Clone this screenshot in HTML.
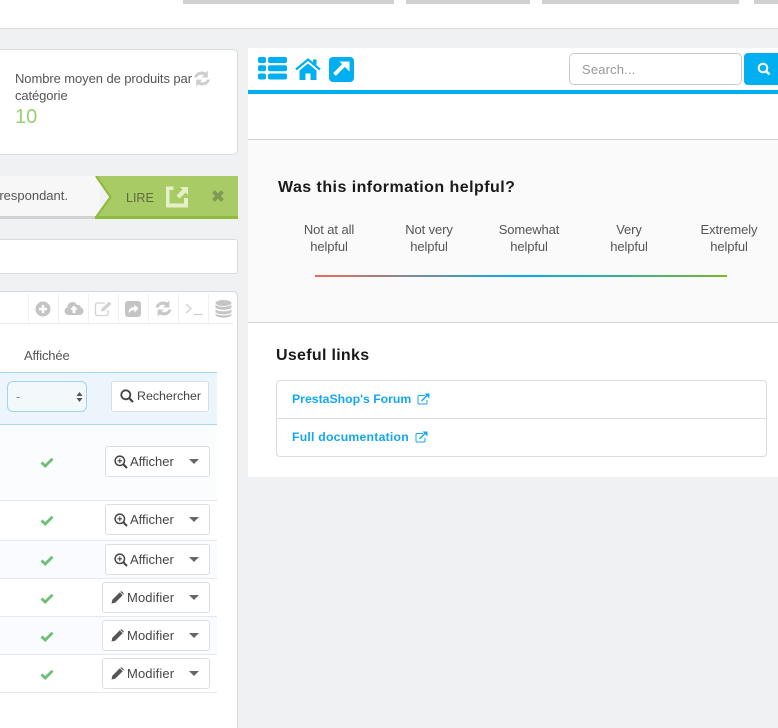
<!DOCTYPE html>
<html><head><meta charset="utf-8">
<style>
html,body{margin:0;padding:0;width:778px;height:728px;overflow:hidden}
body{position:relative;background:#eff1f3;font-family:"Liberation Sans",sans-serif;color:#555;font-size:13px}
div,span,svg{position:absolute;box-sizing:border-box}
#w{left:0;top:0;width:778px;height:728px;overflow:hidden}
.t{white-space:nowrap;line-height:16px}
.c{text-align:center;width:120px;letter-spacing:-.1px}
.btn{background:#fff;border:1px solid #dcdfe2;border-radius:3px}
.row{left:0;width:217px;border-bottom:1px solid #e6e9ec}
.car{width:0;height:0;border-left:5px solid transparent;border-right:5px solid transparent;border-top:5px solid #666}
.b{font-weight:bold;color:#1a1a1a}
.l{font-weight:bold;color:#13a8ee;font-size:12.25px}
.m{letter-spacing:.12px}
</style></head><body><div id="w">

<div style="left:0;top:0;width:778px;height:29px;background:#fff;border-bottom:1px solid #dcdcdc"></div>
<div style="left:183px;top:0;width:211px;height:4px;background:#d0d0d0"></div>
<div style="left:406px;top:0;width:124px;height:4px;background:#d0d0d0"></div>
<div style="left:542px;top:0;width:197px;height:4px;background:#d0d0d0"></div>
<div style="left:754px;top:0;width:24px;height:4px;background:#d0d0d0"></div>

<!-- stat card -->
<div style="left:-6px;top:49px;width:244px;height:106px;background:#fff;border:1px solid #d8dcdf;border-radius:5px"></div>
<div class="t" style="left:15px;top:71px;letter-spacing:-.08px">Nombre moyen de produits par</div>
<div class="t" style="left:15px;top:88px;letter-spacing:-.1px">catégorie</div>
<div class="t" style="left:15px;top:107px;font-size:20px;line-height:20px;color:#9ad071">10</div>
<svg style="left:193px;top:70px" width="18" height="17" viewBox="1 .5 16 16"><path d="M1.500 7.500C2.500 3 7.500 .5 12.500 2.800L14.500 1V7.500H8.500L10.800 5.500C8 4.300 5.300 5.300 4.500 7.500ZM16.500 9.500C15.500 14 10.500 16.500 5.500 14.200L3.500 16V9.500H9.500L7.200 11.500C10 12.700 12.700 11.700 13.500 9.500Z" fill="#cfcfcf"/></svg>

<!-- alert -->
<div style="left:0;top:176px;width:100px;height:43px;background:#f7f7f7;border-bottom:3px solid #d2d2d2"></div>
<div class="t" style="left:-5px;top:188px;color:#555">rrespondant.</div>
<svg style="left:94px;top:176px" width="144" height="43" viewBox="0 0 144 43"><path d="M2 0H144V43H1L16 21Z" fill="#a9cb65"/><path d="M2 0L16.500 21 1.500 42" fill="none" stroke="#8fbb3d" stroke-width="2.200"/><path d="M1 41.500H144" stroke="#8fbb3d" stroke-width="3"/></svg>
<div class="t" style="left:126px;top:190px;color:#5d6b3e;font-size:12.500px">LIRE</div>
<svg style="left:165px;top:185px" width="24" height="23" viewBox="0 0 24 23"><path d="M1 1.500H8.500V5H4.500V18.500H19V13H23V22.500H1Z" fill="#e3f0c8"/><path d="M15 2H23V10L20.500 7.500 14.500 13.500 11.500 10.500 17.500 4.500Z" fill="#e3f0c8"/></svg>
<svg style="left:211px;top:189px" width="14" height="14" viewBox="0 0 14 14"><path d="M2.500 2.500L11.500 11.500M11.500 2.500L2.500 11.500" stroke="#7f9a55" stroke-width="3.800"/></svg>

<!-- input bar -->
<div style="left:-6px;top:239px;width:244px;height:35px;background:#fff;border:1px solid #d8dcdf;border-radius:3px"></div>

<!-- table panel -->
<div style="left:-6px;top:291px;width:244px;height:445px;background:#fff;border:1px solid #d4d8db;border-radius:5px"></div>
<div style="left:0;top:323px;width:233px;height:1px;background:#e8eaec"></div>
<div style="left:28px;top:294px;width:1px;height:29px;background:#eff0f1"></div>
<div style="left:58px;top:294px;width:1px;height:29px;background:#eff0f1"></div>
<div style="left:88px;top:294px;width:1px;height:29px;background:#eff0f1"></div>
<div style="left:118px;top:294px;width:1px;height:29px;background:#eff0f1"></div>
<div style="left:148px;top:294px;width:1px;height:29px;background:#eff0f1"></div>
<div style="left:178px;top:294px;width:1px;height:29px;background:#eff0f1"></div>
<div style="left:208px;top:294px;width:1px;height:29px;background:#eff0f1"></div>

<svg style="left:35px;top:301px" width="16" height="16" viewBox="0 0 16 16"><circle cx="8" cy="8" r="7.500" fill="#c4c4c4"/><path d="M8 4V12M4 8H12" stroke="#fff" stroke-width="2.400"/></svg>
<svg style="left:64px;top:300px" width="20" height="16" viewBox="0 0 20 16"><path d="M5 15C2 15 .5 13 .5 11 .5 9 2 7.500 3.500 7.200 3.500 4 6 2 8.500 2 10.500 2 12 3 13 5 15 4.500 16.800 6 16.800 7.500 18.500 8 19.500 9.500 19.500 11 19.500 13.500 17.500 15 15.500 15Z" fill="#c4c4c4"/><path d="M10 5.500L14 9.500H11.500V13H8.500V9.500H6Z" fill="#fff"/></svg>
<svg style="left:94px;top:300px" width="19" height="17" viewBox="0 0 19 17"><path d="M11 3H3.500Q1.500 3 1.500 5V13.500Q1.500 15.500 3.500 15.500H12Q14 15.500 14 13.500V10" fill="none" stroke="#d2d2d2" stroke-width="1.300"/><path d="M7 11.500L7.800 8.500 15 1.500 17.500 4 10 11Z" fill="#d2d2d2"/></svg>
<svg style="left:125px;top:301px" width="16" height="16" viewBox="0 0 16 16"><rect width="16" height="16" rx="3" fill="#c4c4c4"/><path d="M3.500 12C3.500 8 6 6 9.500 6V3.500L13.500 7.500 9.500 11.500V9C7 9 5 10 3.500 12Z" fill="#fff"/></svg>
<svg style="left:155px;top:300px" width="17" height="17" viewBox="1 .5 16 16"><path d="M1.500 7.500C2.500 3 7.500 .5 12.500 2.800L14.500 1V7.500H8.500L10.800 5.500C8 4.300 5.300 5.300 4.500 7.500ZM16.500 9.500C15.500 14 10.500 16.500 5.500 14.200L3.500 16V9.500H9.500L7.200 11.500C10 12.700 12.700 11.700 13.500 9.500Z" fill="#c8c8c8"/></svg>
<svg style="left:185px;top:302px" width="18" height="14" viewBox="0 0 18 14"><path d="M1 2L6 6.500 1 11" fill="none" stroke="#cdcdcd" stroke-width="1.200"/><path d="M9 12.500H17.500" stroke="#cdcdcd" stroke-width="1.200"/></svg>
<svg style="left:215px;top:300px" width="17" height="18" viewBox="0 0 17 18" fill="#c4c4c4"><ellipse cx="8.500" cy="3" rx="8" ry="3"/><path d="M.5 4.500C2 7.500 15 7.500 16.500 4.500V7.500C15 10.500 2 10.500 .5 7.500Z"/><path d="M.5 9.300C2 12 15 12 16.500 9.300V12C15 15 2 15 .5 12Z"/><path d="M.5 13.500C2 16 15 16 16.500 13.500V15C15 18.500 2 18.500 .5 15Z"/></svg>

<div class="t" style="left:24px;top:348px;letter-spacing:-.15px">Affichée</div>

<!-- filter -->
<div style="left:0;top:372px;width:217px;height:53px;background:#ecf5fb;border-top:1px solid #a5d6f2;border-bottom:1px solid #a5d6f2"></div>
<div style="left:7px;top:381px;width:80px;height:31px;background:#f3f8fa;border:1px solid #a5d2ec;border-radius:6px"></div>
<div class="t" style="left:16px;top:389px;color:#888">-</div>
<svg style="left:76px;top:391px" width="7" height="12" viewBox="0 0 7 12"><path d="M3.500 1L6.500 5H.5ZM3.500 11L.5 7H6.500Z" fill="#555"/></svg>
<div class="btn" style="left:111px;top:381px;width:98px;height:31px"></div>
<svg style="left:120px;top:389px" width="14" height="14" viewBox="0 0 14 14"><circle cx="5.800" cy="5.800" r="4.500" fill="none" stroke="#444" stroke-width="1.800"/><path d="M9 9L13 13" stroke="#444" stroke-width="2.200"/></svg>
<div class="t" style="left:137px;top:388px;color:#444;font-size:12.4px">Rechercher</div>

<!-- rows -->
<div class="row" style="top:425px;height:76px;background:#fafcfe"></div>
<div class="row" style="top:501px;height:40px;background:#fff"></div>
<div class="row" style="top:541px;height:38px;background:#f9fbfe"></div>
<div class="row" style="top:579px;height:38px;background:#fff"></div>
<div class="row" style="top:617px;height:38px;background:#f9fbfe"></div>
<div class="row" style="top:655px;height:38px;background:#fff"></div>

<svg style="left:40px;top:457px" width="14" height="11" viewBox="0 0 14 11"><path d="M1.500 5.500L5.200 9 12.500 1.800" fill="none" stroke="#6cc074" stroke-width="2.800"/></svg>
<svg style="left:40px;top:515px" width="14" height="11" viewBox="0 0 14 11"><path d="M1.500 5.500L5.200 9 12.500 1.800" fill="none" stroke="#6cc074" stroke-width="2.800"/></svg>
<svg style="left:40px;top:555px" width="14" height="11" viewBox="0 0 14 11"><path d="M1.500 5.500L5.200 9 12.500 1.800" fill="none" stroke="#6cc074" stroke-width="2.800"/></svg>
<svg style="left:40px;top:593px" width="14" height="11" viewBox="0 0 14 11"><path d="M1.500 5.500L5.200 9 12.500 1.800" fill="none" stroke="#6cc074" stroke-width="2.800"/></svg>
<svg style="left:40px;top:631px" width="14" height="11" viewBox="0 0 14 11"><path d="M1.500 5.500L5.200 9 12.500 1.800" fill="none" stroke="#6cc074" stroke-width="2.800"/></svg>
<svg style="left:40px;top:669px" width="14" height="11" viewBox="0 0 14 11"><path d="M1.500 5.500L5.200 9 12.500 1.800" fill="none" stroke="#6cc074" stroke-width="2.800"/></svg>

<div class="btn" style="left:105px;top:446px;width:105px;height:31px"></div>
<svg style="left:114px;top:455px" width="14" height="14" viewBox="0 0 14 14"><circle cx="5.800" cy="5.800" r="4.700" fill="none" stroke="#444" stroke-width="1.500"/><path d="M9 9L13 13" stroke="#444" stroke-width="2"/><path d="M3.500 5.800H8.100M5.800 3.500V8.100" stroke="#444" stroke-width="1.100"/></svg>
<div class="t" style="left:130px;top:454px;color:#444">Afficher</div>
<div class="car" style="left:189px;top:459px"></div>

<div class="btn" style="left:105px;top:504px;width:105px;height:31px"></div>
<svg style="left:114px;top:513px" width="14" height="14" viewBox="0 0 14 14"><circle cx="5.800" cy="5.800" r="4.700" fill="none" stroke="#444" stroke-width="1.500"/><path d="M9 9L13 13" stroke="#444" stroke-width="2"/><path d="M3.500 5.800H8.100M5.800 3.500V8.100" stroke="#444" stroke-width="1.100"/></svg>
<div class="t" style="left:130px;top:512px;color:#444">Afficher</div>
<div class="car" style="left:189px;top:517px"></div>

<div class="btn" style="left:105px;top:544px;width:105px;height:31px"></div>
<svg style="left:114px;top:553px" width="14" height="14" viewBox="0 0 14 14"><circle cx="5.800" cy="5.800" r="4.700" fill="none" stroke="#444" stroke-width="1.500"/><path d="M9 9L13 13" stroke="#444" stroke-width="2"/><path d="M3.500 5.800H8.100M5.800 3.500V8.100" stroke="#444" stroke-width="1.100"/></svg>
<div class="t" style="left:130px;top:552px;color:#444">Afficher</div>
<div class="car" style="left:189px;top:557px"></div>

<div class="btn" style="left:102px;top:582px;width:108px;height:31px"></div>
<svg style="left:111px;top:591px" width="13" height="13" viewBox="0 0 13 13"><path d="M.5 12.500L1.300 8.800 8.800 1.300 11.700 4.200 4.200 11.700ZM9.600.5Q10.300 0 11 .5L12.500 2Q13 2.700 12.500 3.400L12.300 3.600 9.400.7Z" fill="#555"/></svg>
<div class="t m" style="left:127px;top:590px;color:#444">Modifier</div>
<div class="car" style="left:189px;top:595px"></div>

<div class="btn" style="left:102px;top:620px;width:108px;height:31px"></div>
<svg style="left:111px;top:629px" width="13" height="13" viewBox="0 0 13 13"><path d="M.5 12.500L1.300 8.800 8.800 1.300 11.700 4.200 4.200 11.700ZM9.600.5Q10.300 0 11 .5L12.500 2Q13 2.700 12.500 3.400L12.300 3.600 9.400.7Z" fill="#555"/></svg>
<div class="t m" style="left:127px;top:628px;color:#444">Modifier</div>
<div class="car" style="left:189px;top:633px"></div>

<div class="btn" style="left:102px;top:658px;width:108px;height:31px"></div>
<svg style="left:111px;top:667px" width="13" height="13" viewBox="0 0 13 13"><path d="M.5 12.500L1.300 8.800 8.800 1.300 11.700 4.200 4.200 11.700ZM9.600.5Q10.300 0 11 .5L12.500 2Q13 2.700 12.500 3.400L12.300 3.600 9.400.7Z" fill="#555"/></svg>
<div class="t m" style="left:127px;top:666px;color:#444">Modifier</div>
<div class="car" style="left:189px;top:671px"></div>

<!-- right panel -->
<div style="left:248px;top:48px;width:530px;height:429px;background:#fff"></div>
<div style="left:248px;top:90px;width:530px;height:4px;background:#00aff0"></div>
<div style="left:248px;top:139px;width:530px;height:184px;background:#fafafa;border-top:1px solid #cfcfcf;border-bottom:1px solid #d4d4d4"></div>

<svg style="left:258px;top:57px" width="29" height="23" viewBox="0 0 29 23" fill="#00aff0"><rect y="0" width="8" height="6" rx="2"/><rect x="10" y="0" width="19" height="6" rx="2"/><rect y="8.200" width="8" height="6" rx="2"/><rect x="10" y="8.200" width="19" height="6" rx="2"/><rect y="16.500" width="8" height="6" rx="2"/><rect x="10" y="16.500" width="19" height="6" rx="2"/></svg>
<svg style="left:295px;top:58px" width="26" height="23" viewBox="0 0 26 23"><path d="M1 11.500L13 1.500 25 11.500" fill="none" stroke="#00aff0" stroke-width="2.200"/><path d="M18 1.500H21.500V7L18 4.500Z" fill="#00aff0"/><path d="M4.500 12.500L13 5.500 21.500 12.500V22H15.500V15.500H10.500V22H4.500Z" fill="#00aff0"/></svg>
<svg style="left:329px;top:57px" width="25" height="25" viewBox="0 0 25 25"><rect width="25" height="25" rx="4" fill="#00aff0"/><path d="M5.500 17.500L15 8" stroke="#fff" stroke-width="3.800"/><path d="M10.500 4.500H20.500V14.500Z" fill="#fff"/></svg>

<div style="left:569px;top:53px;width:173px;height:32px;background:#fff;border:1px solid #c9c9c9;border-radius:5px"></div>
<div class="t" style="left:582px;top:62px;color:#999;letter-spacing:.15px">Search...</div>
<div style="left:744px;top:53px;width:40px;height:32px;background:#00aff0;border-radius:4px"></div>
<svg style="left:757px;top:62px" width="14" height="14" viewBox="0 0 14 14"><circle cx="6" cy="6" r="4.300" fill="none" stroke="#fff" stroke-width="2"/><path d="M9 9L12.500 12.500" stroke="#fff" stroke-width="2.400"/></svg>

<div class="t b" style="left:278px;top:179px;font-size:16px;line-height:18px;letter-spacing:.45px">Was this information helpful?</div>
<div class="t c" style="left:269px;top:221px;line-height:17px">Not at all<br>helpful</div>
<div class="t c" style="left:369px;top:221px;line-height:17px">Not very<br>helpful</div>
<div class="t c" style="left:469px;top:221px;line-height:17px">Somewhat<br>helpful</div>
<div class="t c" style="left:569px;top:221px;line-height:17px">Very<br>helpful</div>
<div class="t c" style="left:669px;top:221px;line-height:17px">Extremely<br>helpful</div>
<div style="left:315px;top:275px;width:412px;height:2px;background:linear-gradient(90deg,#ee6a50 0%,#00aee8 50%,#76b82a 100%)"></div>

<div class="t b" style="left:276px;top:347px;font-size:16px;line-height:18px;letter-spacing:.3px">Useful links</div>
<div style="left:276px;top:380px;width:491px;height:77px;background:#fff;border:1px solid #dcdcdc;border-radius:4px"></div>
<div style="left:277px;top:418px;width:489px;height:1px;background:#dcdcdc"></div>
<div class="t l" style="left:292px;top:391px">PrestaShop's Forum</div>
<svg style="left:417px;top:393px" width="13" height="12" viewBox="0 0 13 12"><path d="M8 2.500H2Q1 2.500 1 3.500V10Q1 11 2 11H9Q10 11 10 10V7" fill="none" stroke="#13a8ee" stroke-width="1"/><path d="M4.500 8L10.500 2" stroke="#13a8ee" stroke-width="1.400"/><path d="M7.500 .5H12.500V5.500Z" fill="#13a8ee"/></svg>
<div class="t l" style="left:292px;top:429px;letter-spacing:.22px">Full documentation</div>
<svg style="left:415px;top:431px" width="13" height="12" viewBox="0 0 13 12"><path d="M8 2.500H2Q1 2.500 1 3.500V10Q1 11 2 11H9Q10 11 10 10V7" fill="none" stroke="#13a8ee" stroke-width="1"/><path d="M4.500 8L10.500 2" stroke="#13a8ee" stroke-width="1.400"/><path d="M7.500 .5H12.500V5.500Z" fill="#13a8ee"/></svg>

</div></body></html>
